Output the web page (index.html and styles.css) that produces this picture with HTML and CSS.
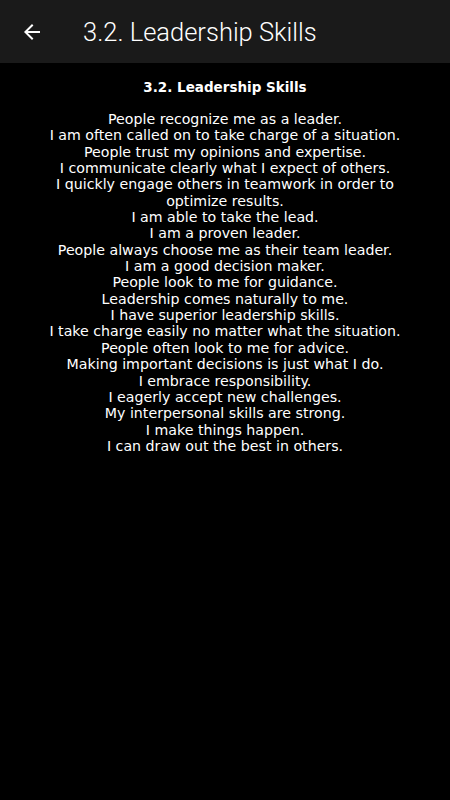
FILE: index.html
```html
<!DOCTYPE html>
<html>
<head>
<meta charset="utf-8">
<link rel="stylesheet" href="styles.css">
</head>
<body>
<header class="appbar">
  <svg class="back" viewBox="0 0 24 24" width="24" height="24"><path d="M20 11H7.83l5.59-5.59L12 4l-8 8 8 8 1.41-1.41L7.83 13H20v-2z" fill="#fff"/></svg>
  <h1 class="appbar-title">3.2. Leadership Skills</h1>
</header>
<main class="content">
  <h2 class="heading">3.2. Leadership Skills</h2>
  <p class="text">People recognize me as a leader.<br>
I am often called on to take charge of a situation.<br>
People trust my opinions and expertise.<br>
I communicate clearly what I expect of others.<br>
I quickly engage others in teamwork in order to optimize results.<br>
I am able to take the lead.<br>
I am a proven leader.<br>
People always choose me as their team leader.<br>
I am a good decision maker.<br>
People look to me for guidance.<br>
Leadership comes naturally to me.<br>
I have superior leadership skills.<br>
I take charge easily no matter what the situation.<br>
People often look to me for advice.<br>
Making important decisions is just what I do.<br>
I embrace responsibility.<br>
I eagerly accept new challenges.<br>
My interpersonal skills are strong.<br>
I make things happen.<br>
I can draw out the best in others.</p>
</main>
</body>
</html>
```
FILE: styles.css
```css
html, body {
  margin: 0;
  padding: 0;
  background: #000;
  height: 100%;
}
.appbar {
  height: 63px;
  background: #1a1a1a;
  display: flex;
  align-items: center;
  padding-left: 20px;
  box-sizing: border-box;
}
.back {
  display: block;
  flex: none;
}
.appbar-title {
  margin: 0 0 0 39px;
  font-family: Roboto, sans-serif;
  font-weight: 300;
  font-size: 25.5px;
  color: #fff;
}
.content {
  padding: 14px 40px 0;
  text-align: center;
  color: #fff;
  font-family: "DejaVu Sans", sans-serif;
}
.heading {
  margin: 0;
  font-size: 13.5px;
  font-weight: 700;
  line-height: 20px;
}
.text {
  margin: 14px 0 0;
  font-size: 14.2px;
  line-height: 16.35px;
}
```
